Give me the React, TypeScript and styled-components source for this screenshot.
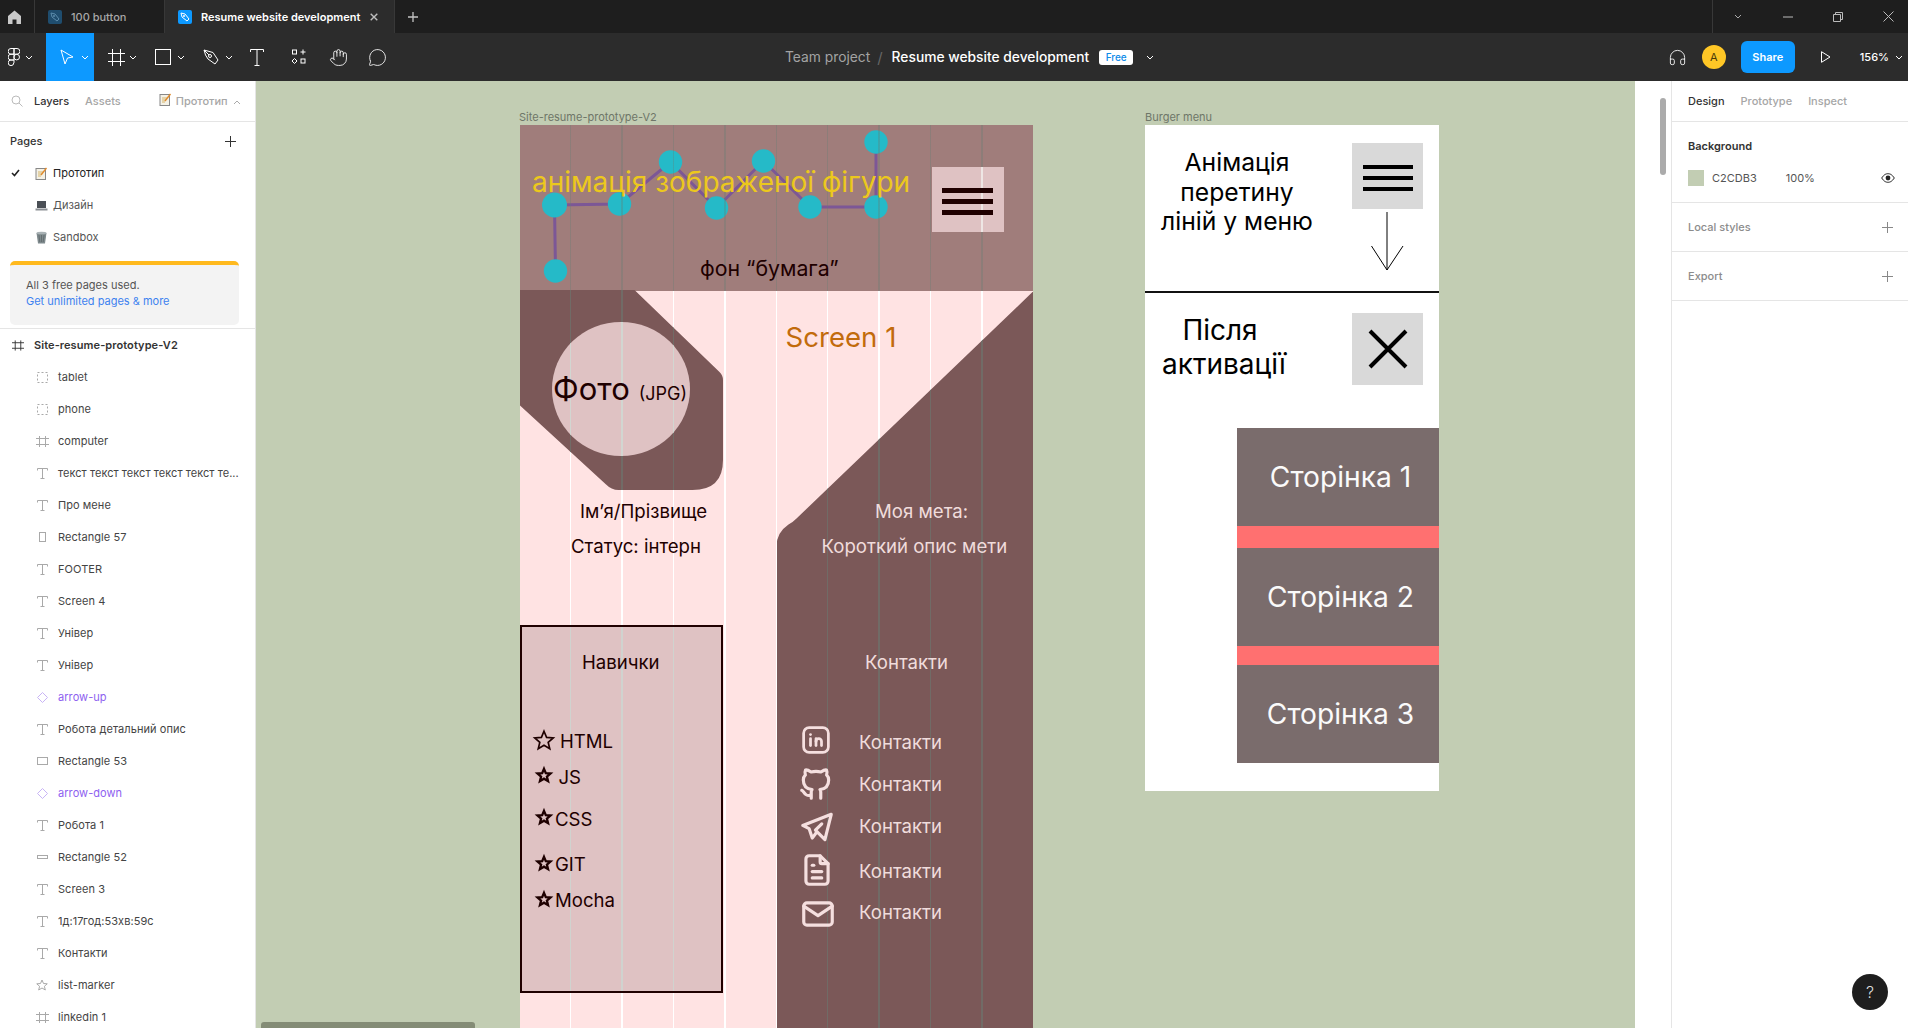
import React from "react";
import styled, { createGlobalStyle } from "styled-components";
import { Hand, MessageCircle, Headphones } from "lucide-react";
import { TbBrandLinkedin, TbBrandGithub, TbBrandTelegram, TbFileText, TbMail } from "react-icons/tb";

const Global = createGlobalStyle`
  html, body { margin: 0; padding: 0; background: #fff; }
  body { font-family: Inter, "Noto Sans", "Liberation Sans", sans-serif; overflow: hidden; }
  * { box-sizing: border-box; }
`;

const Root = styled.div`
  width: 1908px; height: 1028px; display: flex; flex-direction: column; overflow: hidden; position: relative;
`;

/* ---- Tab bar ---- */
const TabBar = styled.div`
  height: 33px; background: #1e1e1e; display: flex; align-items: stretch; flex-shrink: 0;
`;
const HomeTab = styled.div`
  width: 35px; display: flex; align-items: center; justify-content: center; border-right: 1px solid #383838; padding-right: 5px;
`;
const Tab = styled.div<{ $active?: boolean }>`
  width: ${p => (p.$active ? 230 : 130)}px;
  display: flex; align-items: center; gap: 9px;
  padding-left: 13px;
  background: ${p => (p.$active ? "#2c2c2c" : "#1e1e1e")};
  color: ${p => (p.$active ? "#fff" : "#a8a8a8")};
  font-size: 11px; font-weight: ${p => (p.$active ? 600 : 500)};
  border-right: 1px solid #383838; position: relative;
`;
const TabGlyph = styled.span<{ $active?: boolean }>`
  width: 14px; height: 14px; border-radius: 2px; display: flex; align-items: center; justify-content: center;
  background: ${p => (p.$active ? "#0d99ff" : "#1f4d6e")};
`;
const TabClose = styled.span`
  margin-left: 1px; display: flex;
`;
const TabPlus = styled.div`
  width: 36px; display: flex; align-items: center; justify-content: center;
`;
const WindowControls = styled.div`
  margin-left: auto; width: 196px; border-left: 1px solid #383838; display: flex; align-items: center; padding-left: 20px; gap: 40px;
`;

/* ---- Toolbar ---- */
const Toolbar = styled.div`
  height: 48px; background: #2c2c2c; display: flex; align-items: stretch; flex-shrink: 0; color: #fff; position: relative;
`;
const ToolSlot = styled.div<{ $w: number; $pad: number; $gap?: number; $active?: boolean }>`
  width: ${p => p.$w}px; display: flex; align-items: center; gap: ${p => p.$gap ?? 5}px;
  padding-left: ${p => p.$pad}px;
  background: ${p => (p.$active ? "#0d99ff" : "transparent")};
`;
const Breadcrumb = styled.div`
  position: absolute; left: 785px; top: 0; height: 48px; display: flex; align-items: center; font-size: 13.8px; white-space: nowrap;
`;
const Crumb = styled.span`
  color: #a3a3a3;
`;
const CrumbSlash = styled.span`
  color: #666; margin: 0 9px 0 7px; font-size: 15px;
`;
const CrumbTitle = styled.span`
  color: #fff; font-weight: 500;
`;
const FreeBadge = styled.span`
  margin-left: 10px; width: 34px; height: 15px; border-radius: 3px; background: #fff; color: #0d8ce9;
  display: flex; align-items: center; justify-content: center; font-size: 10px; font-weight: 500;
`;
const BreadcrumbChevron = styled.span`
  margin-left: 13px; display: flex;
`;
const ToolRight = styled.div`
  margin-left: auto; display: flex; align-items: center; padding-right: 5px;
`;
const Avatar = styled.div`
  width: 24px; height: 24px; border-radius: 50%; background: #ffc726; color: #4a3a08; font-size: 11px;
  display: flex; align-items: center; justify-content: center; margin: 0 15px 0 15px;
`;
const ShareButton = styled.div`
  width: 54px; height: 32px; border-radius: 6px; background: #0d99ff; color: #fff; font-size: 11px; font-weight: 600;
  display: flex; align-items: center; justify-content: center; margin-right: 26px;
`;
const Zoom = styled.div`
  display: flex; align-items: center; gap: 6px; font-size: 11px; font-weight: 500; margin-left: 29px; color: #fff;
`;

/* ---- Main ---- */
const Main = styled.div`
  flex: 1; display: flex; min-height: 0;
`;
const LeftPanel = styled.aside`
  width: 256px; flex-shrink: 0; background: #fff; border-right: 1px solid #e5e5e5; overflow: hidden;
  color: #333; font-size: 11px;
`;
const PanelTabs = styled.div`
  height: 41px; display: flex; align-items: center; border-bottom: 1px solid #e5e5e5; padding-left: 11px; flex-shrink: 0;
`;
const PanelTab = styled.span<{ $on?: boolean; $ml?: number }>`
  color: ${p => (p.$on ? "#333" : "#a6a6a6")};
  font-weight: 500; font-size: 11px;
  margin-left: ${p => p.$ml ?? 0}px;
  white-space: nowrap;
`;
const PagesHead = styled.div`
  height: 35px; display: flex; align-items: center; justify-content: space-between; padding: 3px 19px 0 10px; font-weight: 500;
`;
const PageRow = styled.div<{ $on?: boolean }>`
  height: 32px; display: flex; align-items: center; position: relative; padding-left: 35px; gap: 5px;
  color: ${p => (p.$on ? "#222" : "#555")};
`;
const Check = styled.span`
  width: 19px; margin-left: -24px; display: flex;
`;
const Banner = styled.div`
  margin: 8px 16px 0 10px; height: 64px; border-top: 4px solid #ffb91d; background: #f3f3f3; border-radius: 5px;
  padding: 12px 16px; font-size: 11px; line-height: 16px; color: #555; white-space: nowrap;
`;
const BannerLink = styled.div`
  color: #3d82f0;
`;
const PanelRule = styled.div`
  height: 1px; background: #e5e5e5; margin-top: 3px;
`;
const LayerHead = styled.div`
  height: 32px; display: flex; align-items: center; padding-left: 12px; gap: 10px; font-weight: 600; color: #333; letter-spacing: .08px;
`;
const LayerRow = styled.div<{ $purple?: boolean }>`
  height: 32px; display: flex; align-items: center; padding-left: 34px; gap: 8px; white-space: nowrap; letter-spacing: .06px;
  color: ${p => (p.$purple ? "#8e5ff0" : "#444")};
`;
const LayerIconBox = styled.span`
  width: 16px; height: 16px; display: flex; align-items: center; justify-content: center; flex-shrink: 0;
`;

const Canvas = styled.main`
  flex: 1; position: relative; background: #c2cdb3; overflow: hidden;
`;
const ScrollGutter = styled.div`
  width: 37px; flex-shrink: 0; background: #fff; border-right: 1px solid #e5e5e5; padding: 17px 0 0 25px;
`;
const ScrollThumbY = styled.div`
  width: 6px; height: 77px; border-radius: 3px; background: #ababab;
`;
const ScrollThumbX = styled.div`
  position: absolute; left: 5px; bottom: 0; width: 214px; height: 6px; border-radius: 3px 3px 0 0; background: #848c76;
`;
const RightPanel = styled.aside`
  width: 236px; flex-shrink: 0; background: #fff; font-size: 11px; color: #333;
`;
const RightTabs = styled.div`
  height: 41px; display: flex; align-items: center; padding-left: 16px; gap: 16px; border-bottom: 1px solid #e5e5e5;
`;
const RightSection = styled.div`
  height: 81px; border-bottom: 1px solid #e5e5e5; padding: 17px 16px 0;
`;
const SectionTitle = styled.div`
  font-weight: 600; line-height: 14px;
`;
const BgRow = styled.div`
  display: flex; align-items: center; margin-top: 17px; height: 16px; color: #555;
`;
const Swatch = styled.span`
  width: 16px; height: 16px; background: #c2cdb3; margin-right: 8px;
`;
const Pct = styled.span`
  margin-left: 29px;
`;
const EyeBox = styled.span`
  margin-left: auto; margin-right: -3px; display: flex;
`;
const CollapsedSection = styled.div`
  height: 49px; border-bottom: 1px solid #e5e5e5; padding: 0 15px 0 16px; display: flex; align-items: center; justify-content: space-between;
  color: #8c8c8c; font-weight: 500;
`;
const HelpButton = styled.div`
  position: absolute; left: 1852px; top: 974px; width: 36px; height: 36px; border-radius: 50%; background: #1e1e1e; color: #ddd;
  display: flex; align-items: center; justify-content: center; font-size: 16px; font-weight: 300;
`;

/* ---- Free canvas nodes ---- */
const FrameLabel = styled.div<{ $x: number }>`
  position: absolute; left: ${p => p.$x}px; top: 29px; font-size: 11px; color: #6e7668; line-height: 14px; white-space: nowrap;
`;
const ResumeFrame = styled.section`
  position: absolute; left: 263.5px; top: 44px; width: 513.5px; height: 1000px; background: #ffe3e3; overflow: hidden; color: #1e0000;
`;
const Lines = styled.div<{ $x: number; $color: string }>`
  position: absolute; top: 0; bottom: 0; left: ${p => -p.$x}px; width: 514px;
  background: repeating-linear-gradient(90deg, transparent 0 50px, ${p => p.$color} 50px 51.4px);
`;
const Header = styled.div`
  position: absolute; left: 0; top: 0; width: 100%; height: 166px; background: #a07d7b; overflow: hidden;
`;
const GraphSvg = styled.svg`
  position: absolute; left: 0; top: 0;
`;
const BurgerButton = styled.div`
  position: absolute; left: 412px; top: 42px; width: 72px; height: 65px; background: #dfc2c3; overflow: hidden;
  display: flex; flex-direction: column; gap: 6px; padding: 21px 10.5px 0;
`;
const BurgerBar = styled.div<{ $dark?: boolean }>`
  height: ${p => (p.$dark ? 4 : 5)}px; background: ${p => (p.$dark ? "#000" : "#200000")}; position: relative;
`;
const PhotoShape = styled.div`
  position: absolute; left: 0; top: 165px; width: 204px; height: 200px; background: #7b5858; overflow: hidden;
  clip-path: path("M0 0 H115 L200 82 Q203.5 85.5 203.5 90 V170 Q203.5 200 173 200 H99 Q92 200 86 194 L0 115 Z");
`;
const PhotoCircle = styled.div`
  position: absolute; left: 32.5px; top: 197px; width: 138px; height: 134px; border-radius: 50%; background: #dfc2c3; overflow: hidden;
`;
const GoalShape = styled.div`
  position: absolute; left: 257px; top: 166.5px; width: 256.6px; height: 840px; background: #7b5858; overflow: hidden;
  clip-path: path("M256.6 0 V840 H0 V255 Q0 241 12 233 Q16 231 20 227 Z");
`;
const SkillsBox = styled.div`
  position: absolute; left: 0; top: 500px; width: 203.5px; height: 368px; background: #dfc2c3; border: 2px solid #200000; overflow: hidden;
`;
const Note = styled.div<{ $x: number; $y: number; $size?: number; $color?: string }>`
  position: absolute; left: ${p => p.$x}px; top: ${p => p.$y}px; transform: translateY(-50%);
  font-size: ${p => p.$size ?? 18.6}px; color: ${p => p.$color ?? "#1e0000"}; white-space: nowrap; line-height: 1.2;
`;
const PhotoLabel = styled.div`
  position: absolute; left: 33.5px; top: 264px; transform: translateY(-50%); display: flex; align-items: baseline; gap: 9px; white-space: nowrap;
  color: #1e0000; font-size: 31px; line-height: 1.2;
`;
const PhotoFormat = styled.span`
  font-size: 18px;
`;
const StarMark = styled.svg<{ $x: number; $y: number }>`
  position: absolute; left: ${p => p.$x}px; top: ${p => p.$y}px; transform: translate(-50%, -50%); overflow: visible;
`;
const ContactIcon = styled.div<{ $x: number; $y: number }>`
  position: absolute; left: ${p => p.$x}px; top: ${p => p.$y}px; transform: translate(-50%, -50%); display: flex; color: #f5dfdf;
`;

const BurgerFrame = styled.section`
  position: absolute; left: 889px; top: 44px; width: 294px; height: 666px; background: #fff; color: #000; overflow: hidden;
`;
const BigText = styled.div<{ $x: number; $y: number; $size: number; $lh: number }>`
  position: absolute; left: ${p => p.$x}px; top: ${p => p.$y}px; text-align: center; font-size: ${p => p.$size}px; line-height: ${p => p.$lh}px; white-space: pre;
`;
const GreyBurger = styled.div`
  position: absolute; left: 207px; top: 18px; width: 71px; height: 66px; background: #d9d9d9;
  display: flex; flex-direction: column; gap: 7px; padding: 22px 10.5px 0;
`;
const ArrowSvg = styled.svg`
  position: absolute; left: 225px; top: 87px;
`;
const BurgerDivider = styled.div`
  position: absolute; left: 0; right: 0; top: 165.5px; height: 2px; background: #111;
`;
const GreyClose = styled.div`
  position: absolute; left: 207px; top: 188px; width: 71px; height: 72px; background: #d9d9d9; display: flex; align-items: center; justify-content: center;
`;
const PageMenu = styled.nav`
  position: absolute; left: 91.5px; top: 303px; width: 203px; height: 335px; display: flex; flex-direction: column; background: #7a6c6c;
`;
const MenuItem = styled.div<{ $h: number }>`
  height: ${p => p.$h}px; display: flex; align-items: center; justify-content: center; color: #fafafa; font-size: 28.2px; padding-left: 5px;
`;
const MenuBar = styled.div<{ $h: number }>`
  height: ${p => p.$h}px; background: #ff7070;
`;

/* ---- Icons ---- */
const Chevron = ({ c = "#fff", up = false, w = 8 }: { c?: string; up?: boolean; w?: number }) => (
  <svg width={w} height={5} viewBox="0 0 8 5" fill="none">
    <path d={up ? "M1 4 L4 1 L7 4" : "M1 1 L4 4 L7 1"} stroke={c} strokeWidth="1" />
  </svg>
);
const Plus = ({ c = "#333", s = 11 }: { c?: string; s?: number }) => (
  <svg width={s} height={s} viewBox="0 0 11 11"><path d="M5.5 0V11M0 5.5H11" stroke={c} strokeWidth="1" /></svg>
);
const LayerIcon = ({ kind }: { kind: string }) => {
  const c = "#a9a9a9";
  if (kind === "T") return <svg width="11" height="11" viewBox="0 0 11 11" fill="none"><path d="M0.5 2.5V0.5H10.5V2.5M5.5 0.5V10.5M3.5 10.5H7.5" stroke={c} /></svg>;
  if (kind === "dash") return <svg width="11" height="11" viewBox="0 0 11 11" fill="none"><rect x="0.5" y="0.5" width="10" height="10" stroke={c} strokeDasharray="2 2" /></svg>;
  if (kind === "grid") return <svg width="13" height="11" viewBox="0 0 13 11" fill="none"><path d="M3.5 0V11M9.5 0V11M0 2.5H13M0 8.5H13" stroke={c} /></svg>;
  if (kind === "tall") return <svg width="7" height="11" viewBox="0 0 7 11" fill="none"><rect x="0.5" y="0.5" width="6" height="9" stroke={c} /></svg>;
  if (kind === "wide") return <svg width="11" height="9" viewBox="0 0 11 9" fill="none"><rect x="0.5" y="0.5" width="10" height="7" stroke={c} /></svg>;
  if (kind === "flat") return <svg width="11" height="5" viewBox="0 0 11 5" fill="none"><rect x="0.5" y="0.5" width="10" height="3" stroke={c} /></svg>;
  if (kind === "star") return <svg width="12" height="12" viewBox="0 0 24 24" fill="none" stroke={c} strokeWidth="2"><path d="M12 2l3 7 7.5.6-5.7 5 1.8 7.4L12 18l-6.6 4 1.8-7.4-5.7-5L9 9z" /></svg>;
  return <svg width="13" height="13" viewBox="0 0 13 13" fill="none"><path d="M6.5 1.5L11.5 6.5L6.5 11.5L1.5 6.5Z" stroke="#c8b4f5" /></svg>;
};
const MemoIcon = () => (
  <svg width="13" height="13" viewBox="0 0 13 13" fill="none">
    <rect x="1" y="1.5" width="9.5" height="11" fill="#f4f1e6" stroke="#888" />
    <path d="M3 5H8M3 7H7M3 9H6" stroke="#d5b56a" />
    <path d="M6 8L11.5 1" stroke="#e08a2c" strokeWidth="1.4" />
  </svg>
);
const LaptopIcon = () => (
  <svg width="13" height="13" viewBox="0 0 13 13"><rect x="2" y="2" width="9" height="7" fill="#4a4f55" /><rect x="0.5" y="9.5" width="12" height="2" fill="#8b8f94" /></svg>
);
const TrashIcon = () => (
  <svg width="13" height="13" viewBox="0 0 13 13"><path d="M1.5 2H11.5L10 12.5H3Z" fill="#7f8a8d" /><ellipse cx="6.5" cy="2" rx="5" ry="1.3" fill="#a9b2b5" /><path d="M4 4L4.8 11M6.5 4V11M9 4L8.2 11" stroke="#5a6366" strokeWidth=".7" /></svg>
);
const TabLogo = ({ c }: { c: string }) => (
  <svg width="10" height="10" viewBox="0 0 10 10" fill="none"><path d="M1 1 L5 2 L9 7 L7 9 L2 5Z" stroke={c} /><circle cx="4" cy="4" r="1" fill={c} /></svg>
);

const graph = [[35.5,146],[34.5,80],[99.5,79],[150.5,37],[196.5,83],[243.5,36],[290,82],[356,82],[356,17]];
const nodes: [number, number, number][] = [[34.5,80,12.5],[99.5,79,11.7],[150.5,37,11.7],[196.5,83,11.7],[243.5,36,11.7],[290,82,11.7],[356,82,11.7],[356,17,11.7],[35.5,146,11.7]];

const STAR = "M12 1.5l3.1 7.4 8 .6-6.1 5.2 1.9 7.8L12 18.3 5.1 22.5 7 14.7.9 9.5l8-.6z";
const skills = [
  { t: "HTML", x: 40.5, y: 615.5, sx: 24, sy: 614.7, s: 20, sw: 2 },
  { t: "JS", x: 39, y: 651.5, sx: 24.5, sy: 650, s: 14, sw: 4 },
  { t: "CSS", x: 35.5, y: 694, sx: 24.5, sy: 692, s: 14, sw: 4 },
  { t: "GIT", x: 35.5, y: 739, sx: 24.5, sy: 738.4, s: 14, sw: 4 },
  { t: "Mocha", x: 35.5, y: 774.5, sx: 24.5, sy: 774.4, s: 14, sw: 4 },
];
const contacts = [
  { I: TbBrandLinkedin, x: 296, y: 614.5, s: 33, ty: 617 },
  { I: TbBrandGithub, x: 296.5, y: 658.5, s: 38, ty: 659.4 },
  { I: TbBrandTelegram, x: 297, y: 702, s: 38, ty: 701.4 },
  { I: TbFileText, x: 297, y: 745, s: 38, ty: 746 },
  { I: TbMail, x: 298.5, y: 789, s: 38, ty: 787 },
];
const layers: [string, string, boolean?][] = [
  ["dash", "tablet"], ["dash", "phone"], ["grid", "computer"], ["T", "текст текст текст текст текст те..."], ["T", "Про мене"],
  ["tall", "Rectangle 57"], ["T", "FOOTER"], ["T", "Screen 4"], ["T", "Універ"], ["T", "Універ"], ["diamond", "arrow-up", true],
  ["T", "Робота детальний опис"], ["wide", "Rectangle 53"], ["diamond", "arrow-down", true], ["T", "Робота 1"], ["flat", "Rectangle 52"],
  ["T", "Screen 3"], ["T", "1д:17год:53хв:59с"], ["T", "Контакти"], ["star", "list-marker"], ["grid", "linkedin 1"],
];

export default function App() {
  return (
    <Root>
      <Global />
      <TabBar>
        <HomeTab>
          <svg width="13" height="14" viewBox="0 0 13 14"><path d="M6.5 0.5L13 6V14H8.5V9.5H4.5V14H0V6Z" fill="#c9c9c9" /></svg>
        </HomeTab>
        <Tab><TabGlyph><TabLogo c="#5b8bab" /></TabGlyph>100 button</Tab>
        <Tab $active>
          <TabGlyph $active><TabLogo c="#fff" /></TabGlyph>Resume website development
          <TabClose><svg width="8" height="8" viewBox="0 0 8 8"><path d="M.7.7L7.3 7.3M7.3.7L.7 7.3" stroke="#bdbdbd" strokeWidth="1.4" /></svg></TabClose>
        </Tab>
        <TabPlus><svg width="10" height="10" viewBox="0 0 10 10"><path d="M5 0V10M0 5H10" stroke="#c4c4c4" strokeWidth="1.3" /></svg></TabPlus>
        <WindowControls>
          <Chevron c="#aaa" w={10} />
          <svg width="10" height="10" viewBox="0 0 10 10"><path d="M0 5H10" stroke="#bbb" /></svg>
          <svg width="10" height="10" viewBox="0 0 10 10" fill="none"><path d="M0.5 2.5H7.5V9.5H0.5ZM2.5 2.5V0.5H9.5V7.5H7.5" stroke="#bbb" /></svg>
          <svg width="11" height="11" viewBox="0 0 11 11"><path d="M0.5 0.5L10.5 10.5M10.5 0.5L0.5 10.5" stroke="#bbb" /></svg>
        </WindowControls>
      </TabBar>

      <Toolbar>
        <ToolSlot $w={46} $pad={8}>
          <svg width="12" height="18" viewBox="0 0 12 18" fill="none" stroke="#fff" strokeWidth="1">
            <path d="M6 .5H3a2.8 2.8 0 000 5.7h3zM6 .5h3a2.8 2.8 0 010 5.7H6zM6 6.2H3A2.8 2.8 0 003 12h3zM6 12H3a2.8 2.8 0 102.8 2.8H6zM11.5 9.1a2.8 2.8 0 11-5.6 0 2.8 2.8 0 015.6 0z" />
          </svg>
          <Chevron />
        </ToolSlot>
        <ToolSlot $w={48} $pad={14} $gap={7} $active>
          <svg width="14" height="16" viewBox="0 0 14 16" fill="none"><path d="M1 1L13 8L7.5 9L5 15Z" stroke="#fff" strokeWidth="1" /></svg>
          <Chevron />
        </ToolSlot>
        <ToolSlot $w={47} $pad={13.5} $gap={4}>
          <svg width="17" height="17" viewBox="0 0 17 17" fill="none"><path d="M4.5 0V17M12.5 0V17M0 4.5H17M0 12.5H17" stroke="#fff" /></svg>
          <Chevron />
        </ToolSlot>
        <ToolSlot $w={48} $pad={14} $gap={6}>
          <svg width="16" height="16" viewBox="0 0 16 16" fill="none"><rect x=".5" y=".5" width="15" height="15" stroke="#fff" /></svg>
          <Chevron />
        </ToolSlot>
        <ToolSlot $w={48} $pad={14} $gap={6}>
          <svg width="16" height="16" viewBox="0 0 16 16" fill="none"><path d="M1 1L10 3.5L15 11L12 15L5 10L2.5 6ZM1 1L6 6" stroke="#fff" /><circle cx="7" cy="7" r="1.5" stroke="#fff" /></svg>
          <Chevron />
        </ToolSlot>
        <ToolSlot $w={44} $pad={13}>
          <svg width="14" height="17" viewBox="0 0 14 17" fill="none"><path d="M.5 3V.5H13.5V3M7 .5V16.5M4.5 16.5H9.5" stroke="#fff" /></svg>
        </ToolSlot>
        <ToolSlot $w={41} $pad={10}>
          <svg width="16" height="16" viewBox="0 0 16 16" fill="none"><rect x="1.5" y="1" width="4" height="4" stroke="#fff" /><path d="M12 .5V5.5M9.5 3H14.5" stroke="#fff" /><path d="M3.5 9.5L6 12L3.5 14.5L1 12Z" stroke="#fff" /><rect x="10" y="10" width="4" height="4" stroke="#fff" /></svg>
        </ToolSlot>
        <ToolSlot $w={38} $pad={6.5}><Hand size={19} color="#fff" strokeWidth={1.1} /></ToolSlot>
        <ToolSlot $w={40} $pad={7.5}><MessageCircle size={19} color="#fff" strokeWidth={1.1} /></ToolSlot>

        <Breadcrumb>
          <Crumb>Team project</Crumb>
          <CrumbSlash>/</CrumbSlash>
          <CrumbTitle>Resume website development</CrumbTitle>
          <FreeBadge>Free</FreeBadge>
          <BreadcrumbChevron><Chevron /></BreadcrumbChevron>
        </Breadcrumb>

        <ToolRight>
          <Headphones size={19} color="#fff" strokeWidth={1.1} />
          <Avatar>A</Avatar>
          <ShareButton>Share</ShareButton>
          <svg width="10" height="12" viewBox="0 0 10 12" fill="none"><path d="M.5 .7L9 6L.5 11.3Z" stroke="#fff" /></svg>
          <Zoom>156%<Chevron /></Zoom>
        </ToolRight>
      </Toolbar>

      <Main>
        <LeftPanel>
          <PanelTabs>
            <svg width="12" height="12" viewBox="0 0 12 12" fill="none"><circle cx="5" cy="5" r="4" stroke="#bbb" /><path d="M8 8L11.5 11.5" stroke="#bbb" /></svg>
            <PanelTab $on $ml={11}>Layers</PanelTab>
            <PanelTab $ml={16}>Assets</PanelTab>
            <PanelTab $ml={38}><MemoIcon /></PanelTab>
            <PanelTab $ml={4}>Прототип</PanelTab>
            <PanelTab $ml={5}><Chevron c="#aaa" up /></PanelTab>
          </PanelTabs>
          <PagesHead>Pages<Plus /></PagesHead>
          <PageRow $on><Check><svg width="9" height="8" viewBox="0 0 9 8" fill="none"><path d="M1 4L3.5 6.5L8 1" stroke="#222" strokeWidth="1.6" /></svg></Check><MemoIcon />Прототип</PageRow>
          <PageRow><LaptopIcon />Дизайн</PageRow>
          <PageRow><TrashIcon />Sandbox</PageRow>
          <Banner>
            All 3 free pages used.
            <BannerLink>Get unlimited pages &amp; more</BannerLink>
          </Banner>
          <PanelRule />
          <LayerHead>
            <svg width="12" height="11" viewBox="0 0 13 11" fill="none"><path d="M3.5 0V11M9.5 0V11M0 2.5H13M0 8.5H13" stroke="#333" /></svg>
            Site-resume-prototype-V2
          </LayerHead>
          {layers.map(([k, t, purple], i) => (
            <LayerRow key={i} $purple={purple}>
              <LayerIconBox><LayerIcon kind={k} /></LayerIconBox>
              {t}
            </LayerRow>
          ))}
        </LeftPanel>

        <Canvas>
          <FrameLabel $x={263}>Site-resume-prototype-V2</FrameLabel>
          <FrameLabel $x={889}>Burger menu</FrameLabel>

          <ResumeFrame>
            <Lines $x={0} $color="#ffffff" />
            <Header>
              <GraphSvg width="514" height="166" viewBox="0 0 514 166" fill="none">
                <polyline points={graph.map(p => p.join(",")).join(" ")} stroke="#7c5796" strokeWidth="3" />
                {nodes.map(([x, y, r], i) => <circle key={i} cx={x} cy={y} r={r} fill="#25bac8" />)}
              </GraphSvg>
              <Lines $x={0} $color="rgba(100,125,115,.32)" />
              <BurgerButton>
                <Lines $x={412} $color="#eee6e4" />
                <BurgerBar /><BurgerBar /><BurgerBar />
              </BurgerButton>
              <Note $x={12.5} $y={58} $size={28} $color="#ecc81d">анімація зображеної фігури</Note>
              <Note $x={180.5} $y={144} $size={21.3}>фон “бумага”</Note>
            </Header>
            <PhotoShape><Lines $x={0} $color="#716b66" /></PhotoShape>
            <PhotoCircle><Lines $x={32.5} $color="#d2d6d1" /></PhotoCircle>
            <PhotoLabel>Фото<PhotoFormat>(JPG)</PhotoFormat></PhotoLabel>
            <Note $x={266} $y={213} $size={27.6} $color="#c26b0c">Screen 1</Note>
            <GoalShape><Lines $x={257} $color="#716b66" /></GoalShape>
            <Note $x={60.5} $y={385.5}>Ім’я/Прізвище</Note>
            <Note $x={51.5} $y={421}>Статус: інтерн</Note>
            <Note $x={355.5} $y={385.5} $color="#f0dcdc">Моя мета:</Note>
            <Note $x={302} $y={421} $color="#f0dcdc">Короткий опис мети</Note>
            <SkillsBox><Lines $x={2} $color="#d0d3cf" /></SkillsBox>
            <Note $x={62.5} $y={537}>Навички</Note>
            <Note $x={345.5} $y={537} $color="#f0dcdc">Контакти</Note>
            {skills.map(s => (
              <React.Fragment key={s.t}>
                <StarMark $x={s.sx} $y={s.sy} width={s.s} height={s.s} viewBox="0 0 24 24" fill="none" stroke="#1e0000" strokeWidth={s.sw}>
                  <path d={STAR} />
                </StarMark>
                <Note $x={s.x} $y={s.y}>{s.t}</Note>
              </React.Fragment>
            ))}
            {contacts.map(({ I, x, y, s, ty }, i) => (
              <React.Fragment key={i}>
                <ContactIcon $x={x} $y={y}><I size={s} strokeWidth={2} /></ContactIcon>
                <Note $x={339.5} $y={ty} $color="#f0dcdc">Контакти</Note>
              </React.Fragment>
            ))}
          </ResumeFrame>

          <BurgerFrame>
            <BigText $x={16} $y={23} $size={24.7} $lh={29.5}>{"Анімація\nперетину\nліній у меню"}</BigText>
            <GreyBurger><BurgerBar $dark /><BurgerBar $dark /><BurgerBar $dark /></GreyBurger>
            <ArrowSvg width="34" height="60" viewBox="0 0 34 60" fill="none">
              <path d="M17 0V58M1.5 34L17 58L33 34" stroke="#000" strokeWidth="1" />
            </ArrowSvg>
            <BurgerDivider />
            <BigText $x={17} $y={188} $size={28} $lh={34}>{"Після \nактивації"}</BigText>
            <GreyClose>
              <svg width="40" height="40" viewBox="0 0 40 40"><path d="M2 2L38 38M38 2L2 38" stroke="#000" strokeWidth="4" /></svg>
            </GreyClose>
            <PageMenu>
              <MenuItem $h={98}>Сторінка 1</MenuItem>
              <MenuBar $h={22} />
              <MenuItem $h={98}>Сторінка 2</MenuItem>
              <MenuBar $h={19} />
              <MenuItem $h={98}>Сторінка 3</MenuItem>
            </PageMenu>
          </BurgerFrame>
          <ScrollThumbX />
        </Canvas>

        <ScrollGutter><ScrollThumbY /></ScrollGutter>

        <RightPanel>
          <RightTabs>
            <PanelTab $on>Design</PanelTab>
            <PanelTab>Prototype</PanelTab>
            <PanelTab>Inspect</PanelTab>
          </RightTabs>
          <RightSection>
            <SectionTitle>Background</SectionTitle>
            <BgRow>
              <Swatch />C2CDB3<Pct>100%</Pct>
              <EyeBox>
                <svg width="14" height="10" viewBox="0 0 14 10" fill="none"><path d="M.7 5C3 1.5 5 .7 7 .7S11 1.5 13.3 5C11 8.5 9 9.3 7 9.3S3 8.5.7 5Z" stroke="#222" /><circle cx="7" cy="5" r="2.4" fill="#222" /></svg>
              </EyeBox>
            </BgRow>
          </RightSection>
          <CollapsedSection>Local styles<Plus c="#888" /></CollapsedSection>
          <CollapsedSection>Export<Plus c="#888" /></CollapsedSection>
        </RightPanel>
      </Main>
      <HelpButton>?</HelpButton>
    </Root>
  );
}
